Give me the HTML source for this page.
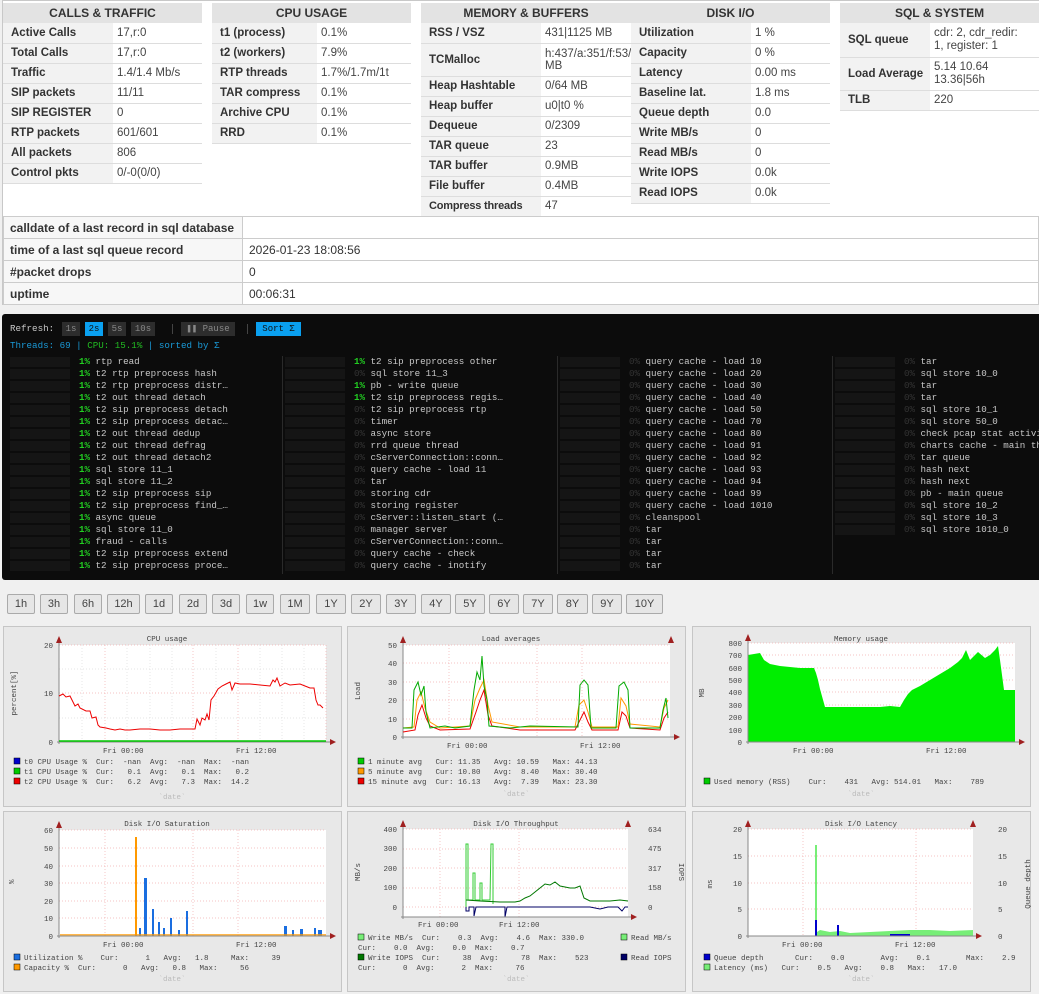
<!DOCTYPE html>
<html><head><meta charset="utf-8">
<style>
*{box-sizing:border-box;margin:0;padding:0}
body{width:1039px;height:994px;background:#f0f0f0;font-family:"Liberation Sans",Tahoma,sans-serif;position:relative;overflow:hidden;color:#333}
#top{position:absolute;left:2px;top:0;width:1040px;height:305px;background:#fff;border:1px solid #c8c8c8}
table.t{position:absolute;border-collapse:collapse;font-size:11.5px;table-layout:fixed}
table.t th{background:#e3e3e3;height:20px;font-weight:bold;color:#333;text-align:center;font-size:12px}
table.t td{border-bottom:1px solid #ddd;height:20px;padding:0 1px 0 8px;vertical-align:middle;white-space:nowrap;overflow:hidden}
table.t td.l{background:#f2f2f2;font-weight:bold;color:#333}
table.t td.v{color:#444;font-size:11.5px;padding-left:4px}
#bot{position:absolute;left:3px;top:216px;width:1036px;border-collapse:collapse;font-size:12px}
#bot td{height:22px;border:1px solid #ccc;padding:0 6px}
#bot td.l{width:239px;font-weight:bold;background:#f7f7f7}
#term{position:absolute;left:2px;top:314px;width:1040px;height:266px;background:#0c0c0c;border-radius:3px;font-family:"Liberation Mono","DejaVu Sans Mono",monospace;font-size:9.2px;color:#c8c8c8}
.tb{position:absolute;top:8px;height:14px;line-height:14px;background:#2d2d2d;color:#888;text-align:center;font-size:9px}
.row{position:absolute;height:11px;line-height:11px;white-space:nowrap}
.bar{position:absolute;width:60px;height:10px;background:#151515}
.sep{position:absolute;width:1px;background:#2a2a2a}
.p1{color:#22cc22;font-weight:bold}.p0{color:#333}
.pb{position:absolute;top:594px;height:20px;line-height:18px;border:1px solid #aaa;border-radius:2px;background:#e6e6e6;font-size:11px;color:#444;text-align:center}
.ch{position:absolute;width:339px;height:181px;background:#e8e8e8;border:1px solid #c6c6c6}
.ch svg{position:absolute;left:-1px;top:-1px}
svg text{font-family:"Liberation Mono","DejaVu Sans Mono",monospace;font-size:7.5px;fill:#444}
</style></head><body>
<div id="top"></div>
<table class="t" style="left:3px;top:3px;width:199px"><colgroup><col style="width:110px"><col style="width:89px"></colgroup>
<tr><th colspan="2">CALLS &amp; TRAFFIC</th></tr>
<tr><td class="l">Active Calls</td><td class="v">17,r:0</td></tr>
<tr><td class="l">Total Calls</td><td class="v">17,r:0</td></tr>
<tr><td class="l">Traffic</td><td class="v">1.4/1.4 Mb/s</td></tr>
<tr><td class="l">SIP packets</td><td class="v">11/11</td></tr>
<tr><td class="l">SIP REGISTER</td><td class="v">0</td></tr>
<tr><td class="l">RTP packets</td><td class="v">601/601</td></tr>
<tr><td class="l">All packets</td><td class="v">806</td></tr>
<tr><td class="l">Control pkts</td><td class="v">0/-0(0/0)</td></tr>
</table>
<table class="t" style="left:212px;top:3px;width:199px"><colgroup><col style="width:105px"><col style="width:94px"></colgroup>
<tr><th colspan="2">CPU USAGE</th></tr>
<tr><td class="l">t1 (process)</td><td class="v">0.1%</td></tr>
<tr><td class="l">t2 (workers)</td><td class="v">7.9%</td></tr>
<tr><td class="l">RTP threads</td><td class="v">1.7%/1.7m/1t</td></tr>
<tr><td class="l">TAR compress</td><td class="v">0.1%</td></tr>
<tr><td class="l">Archive CPU</td><td class="v">0.1%</td></tr>
<tr><td class="l">RRD</td><td class="v">0.1%</td></tr>
</table>
<table class="t" style="left:421px;top:3px;width:210px"><colgroup><col style="width:120px"><col style="width:90px"></colgroup>
<tr><th colspan="2">MEMORY &amp; BUFFERS</th></tr>
<tr><td class="l">RSS / VSZ</td><td class="v">431|1125 MB</td></tr>
<tr><td class="l" style="height:33px">TCMalloc</td><td class="v" style="line-height:12px">h:437/a:351/f:53/<br>MB</td></tr>
<tr><td class="l">Heap Hashtable</td><td class="v">0/64 MB</td></tr>
<tr><td class="l">Heap buffer</td><td class="v">u0|t0 %</td></tr>
<tr><td class="l">Dequeue</td><td class="v">0/2309</td></tr>
<tr><td class="l">TAR queue</td><td class="v">23</td></tr>
<tr><td class="l">TAR buffer</td><td class="v">0.9MB</td></tr>
<tr><td class="l">File buffer</td><td class="v">0.4MB</td></tr>
<tr><td class="l" style="font-size:11px;letter-spacing:-0.2px">Compress threads</td><td class="v">47</td></tr>
</table>
<table class="t" style="left:631px;top:3px;width:199px"><colgroup><col style="width:120px"><col style="width:79px"></colgroup>
<tr><th colspan="2">DISK I/O</th></tr>
<tr><td class="l">Utilization</td><td class="v">1 %</td></tr>
<tr><td class="l">Capacity</td><td class="v">0 %</td></tr>
<tr><td class="l">Latency</td><td class="v">0.00 ms</td></tr>
<tr><td class="l">Baseline lat.</td><td class="v">1.8 ms</td></tr>
<tr><td class="l">Queue depth</td><td class="v">0.0</td></tr>
<tr><td class="l">Write MB/s</td><td class="v">0</td></tr>
<tr><td class="l">Read MB/s</td><td class="v">0</td></tr>
<tr><td class="l">Write IOPS</td><td class="v">0.0k</td></tr>
<tr><td class="l">Read IOPS</td><td class="v">0.0k</td></tr>
</table>
<table class="t" style="left:840px;top:3px;width:199px"><colgroup><col style="width:90px"><col style="width:109px"></colgroup>
<tr><th colspan="2">SQL &amp; SYSTEM</th></tr>
<tr><td class="l" style="height:34px">SQL queue</td><td class="v" style="line-height:13px">cdr: 2, cdr_redir:<br>1, register: 1</td></tr>
<tr><td class="l" style="height:33px">Load Average</td><td class="v" style="line-height:13px">5.14 10.64<br>13.36|56h</td></tr>
<tr><td class="l">TLB</td><td class="v">220</td></tr>
</table>
<table id="bot">
<tr><td class="l">calldate of a last record in sql database</td><td></td></tr>
<tr><td class="l">time of a last sql queue record</td><td>2026-01-23 18:08:56</td></tr>
<tr><td class="l">#packet drops</td><td>0</td></tr>
<tr><td class="l">uptime</td><td>00:06:31</td></tr>
</table>

<div id="term">
<div class="row" style="left:8px;top:8px;line-height:14px">Refresh:</div>
<div class="tb" style="left:60px;width:18px">1s</div>
<div class="tb" style="left:83px;width:18px;background:#0aa0f0;color:#111">2s</div>
<div class="tb" style="left:106px;width:18px">5s</div>
<div class="tb" style="left:129px;width:24px">10s</div>
<div class="sep" style="left:170px;top:10px;height:10px;background:#444"></div>
<div class="tb" style="left:179px;width:54px">❚❚ Pause</div>
<div class="sep" style="left:245px;top:10px;height:10px;background:#444"></div>
<div class="tb" style="left:254px;width:45px;background:#0aa0f0;color:#111">Sort Σ</div>
<div class="row" style="left:8px;top:26px;color:#1a9ad8">Threads: 69 | <span style="color:#22bb22">CPU: 15.1%</span> | sorted by Σ</div>
<div id="rows"></div>
</div>
<script>
var cols=[
["1rtp read","1t2 rtp preprocess hash","1t2 rtp preprocess distr…","1t2 out thread detach","1t2 sip preprocess detach","1t2 sip preprocess detac…","1t2 out thread dedup","1t2 out thread defrag","1t2 out thread detach2","1sql store 11_1","1sql store 11_2","1t2 sip preprocess sip","1t2 sip preprocess find_…","1async queue","1sql store 11_0","1fraud - calls","1t2 sip preprocess extend","1t2 sip preprocess proce…"],
["1t2 sip preprocess other","0sql store 11_3","1pb - write queue","1t2 sip preprocess regis…","0t2 sip preprocess rtp","0timer","0async store","0rrd queue thread","0cServerConnection::conn…","0query cache - load 11","0tar","0storing cdr","0storing register","0cServer::listen_start (…","0manager server","0cServerConnection::conn…","0query cache - check","0query cache - inotify"],
["0query cache - load 10","0query cache - load 20","0query cache - load 30","0query cache - load 40","0query cache - load 50","0query cache - load 70","0query cache - load 80","0query cache - load 91","0query cache - load 92","0query cache - load 93","0query cache - load 94","0query cache - load 99","0query cache - load 1010","0cleanspool","0tar","0tar","0tar","0tar"],
["0tar","0sql store 10_0","0tar","0tar","0sql store 10_1","0sql store 50_0","0check pcap stat activity","0charts cache - main thread","0tar queue","0hash next","0hash next","0pb - main queue","0sql store 10_2","0sql store 10_3","0sql store 1010_0"]];
var h="",xs=[8,283,558,833];
cols.forEach(function(c,ci){var x=xs[ci];
 if(ci>0)h+='<div class="sep" style="left:'+(x-3)+'px;top:42px;height:218px"></div>';
 c.forEach(function(s,i){var y=42+i*12;
  h+='<div class="bar" style="left:'+x+'px;top:'+(y+1)+'px"></div>';
  h+='<div class="row" style="left:'+(x+69)+'px;top:'+y+'px"><span class="'+(s[0]=="1"?"p1":"p0")+'">'+s[0]+'%</span> '+s.slice(1)+'</div>';});});
document.getElementById("rows").innerHTML=h;
</script>

<div class="pb" style="left:7px;width:28px">1h</div>
<div class="pb" style="left:40px;width:28px">3h</div>
<div class="pb" style="left:74px;width:28px">6h</div>
<div class="pb" style="left:107px;width:33px">12h</div>
<div class="pb" style="left:145px;width:28px">1d</div>
<div class="pb" style="left:179px;width:28px">2d</div>
<div class="pb" style="left:212px;width:28px">3d</div>
<div class="pb" style="left:246px;width:28px">1w</div>
<div class="pb" style="left:280px;width:30px">1M</div>
<div class="pb" style="left:316px;width:30px">1Y</div>
<div class="pb" style="left:351px;width:30px">2Y</div>
<div class="pb" style="left:386px;width:30px">3Y</div>
<div class="pb" style="left:421px;width:30px">4Y</div>
<div class="pb" style="left:455px;width:30px">5Y</div>
<div class="pb" style="left:489px;width:30px">6Y</div>
<div class="pb" style="left:523px;width:30px">7Y</div>
<div class="pb" style="left:557px;width:31px">8Y</div>
<div class="pb" style="left:592px;width:30px">9Y</div>
<div class="pb" style="left:626px;width:37px">10Y</div>

<!-- charts -->
<div class="ch" style="left:3px;top:626px"><svg width="339" height="181"><g transform="translate(-3,-626)">
<rect x="59" y="645" width="267" height="97" fill="#fff"/>
<g stroke="#f2b0b0" stroke-dasharray="1,2" stroke-width="0.7"><line x1="59" x2="326" y1="645" y2="645"/><line x1="59" x2="326" y1="693" y2="693"/><line x1="105" x2="105" y1="645" y2="742"/><line x1="238" x2="238" y1="645" y2="742"/><line x1="193" x2="193" y1="645" y2="742"/><line x1="326" x2="326" y1="645" y2="742"/></g>
<g stroke="#ddd" stroke-dasharray="1,2" stroke-width="0.7"><line x1="59" x2="326" y1="669" y2="669"/><line x1="59" x2="326" y1="718" y2="718"/><line x1="82" x2="82" y1="645" y2="742"/><line x1="127" x2="127" y1="645" y2="742"/><line x1="150" x2="150" y1="645" y2="742"/><line x1="172" x2="172" y1="645" y2="742"/><line x1="216" x2="216" y1="645" y2="742"/><line x1="260" x2="260" y1="645" y2="742"/><line x1="282" x2="282" y1="645" y2="742"/><line x1="304" x2="304" y1="645" y2="742"/></g>
<line x1="59" y1="640" x2="59" y2="744" stroke="#888"/><line x1="57" y1="742" x2="332" y2="742" stroke="#888"/>
<path d="M56,643 L59,636 L62,643Z M330,739 L336,742 L330,745Z" fill="#a02020"/>
<polyline fill="none" stroke="#e00" stroke-width="1" points="59,696 63,694 66,697 70,696 72,700 75,706 78,704 80,708 86,711 90,711 92,718 96,717 98,725 100,727 106,728 110,729 115,730 120,729 125,730 130,730 140,729 150,729 160,730 170,730 180,729 190,729 195,729 197,719 200,725 202,718 205,720 207,714 209,720 211,700 214,696 218,689 222,686 226,684 230,682 232,690 235,683 240,684 250,684 260,685 270,686 273,680 275,682 277,678 280,686 285,683 290,685 300,684 305,686 310,688 314,688 316,700 318,705 320,705 323,708"/>
<line x1="59" x2="326" y1="741" y2="741" stroke="#0c0" stroke-width="1.5"/>
<text x="167" y="641" text-anchor="middle">CPU usage</text>
<text x="53" y="648" text-anchor="end">20</text><text x="53" y="696" text-anchor="end">10</text><text x="53" y="745" text-anchor="end">0</text>
<text x="16" y="693" transform="rotate(-90 16 693)" text-anchor="middle">percent[%]</text>
<text x="103" y="753">Fri 00:00</text><text x="236" y="753">Fri 12:00</text>
<rect x="14" y="758" width="6" height="6" fill="#00c" stroke="#000" stroke-width=".5"/><rect x="14" y="768" width="6" height="6" fill="#0c0" stroke="#000" stroke-width=".5"/><rect x="14" y="778" width="6" height="6" fill="#e00" stroke="#000" stroke-width=".5"/>
<text x="24" y="764" xml:space="preserve">t0 CPU Usage %  Cur:  -nan  Avg:  -nan  Max:  -nan</text>
<text x="24" y="774" xml:space="preserve">t1 CPU Usage %  Cur:   0.1  Avg:   0.1  Max:   0.2</text>
<text x="24" y="784" xml:space="preserve">t2 CPU Usage %  Cur:   6.2  Avg:   7.3  Max:  14.2</text>
<text x="172" y="799" text-anchor="middle" style="fill:#bbb">`date`</text>
</g></svg></div>

<div class="ch" style="left:347px;top:626px"><svg width="339" height="181"><g transform="translate(-347,-626)">
<rect x="403" y="645" width="267" height="92" fill="#fff"/>
<g stroke="#f2b0b0" stroke-dasharray="1,2" stroke-width="0.7"><line x1="403" x2="670" y1="645" y2="645"/><line x1="403" x2="670" y1="663" y2="663"/><line x1="403" x2="670" y1="682" y2="682"/><line x1="403" x2="670" y1="700" y2="700"/><line x1="403" x2="670" y1="719" y2="719"/><line x1="449" x2="449" y1="645" y2="737"/><line x1="582" x2="582" y1="645" y2="737"/><line x1="537" x2="537" y1="645" y2="737"/></g>
<line x1="403" y1="640" x2="403" y2="739" stroke="#888"/><line x1="401" y1="737" x2="676" y2="737" stroke="#888"/>
<path d="M400,643 L403,636 L406,643Z M674,734 L680,737 L674,740Z M668,643 L671,636 L674,643Z" fill="#a02020"/>
<polyline fill="none" stroke="#e00" points="403,732 415,730 418,715 422,705 426,718 430,726 440,730 470,729 476,712 480,700 484,690 488,715 492,726 520,730 575,730 580,720 584,712 588,722 592,730 618,730 622,712 626,716 630,728 660,730 664,718 668,712"/>
<polyline fill="none" stroke="#f90" points="403,728 414,727 417,700 421,692 425,708 430,722 440,728 470,726 475,700 480,688 484,680 488,705 492,722 520,727 575,727 579,705 584,700 588,712 592,727 618,727 621,698 626,706 630,724 660,727 664,708 668,700"/>
<polyline fill="none" stroke="#0a0" points="403,728 412,728 414,690 418,682 421,695 424,686 426,712 430,728 445,726 455,728 470,726 474,690 477,672 480,680 482,656 484,686 487,700 489,726 510,728 530,726 578,727 580,685 584,680 588,685 591,728 616,728 619,686 624,682 628,690 630,728 660,728 663,710 666,698 668,718"/>
<text x="511" y="641" text-anchor="middle">Load averages</text>
<text x="397" y="648" text-anchor="end">50</text><text x="397" y="666" text-anchor="end">40</text><text x="397" y="685" text-anchor="end">30</text><text x="397" y="703" text-anchor="end">20</text><text x="397" y="722" text-anchor="end">10</text><text x="397" y="740" text-anchor="end">0</text>
<text x="360" y="691" transform="rotate(-90 360 691)" text-anchor="middle">Load</text>
<text x="447" y="748">Fri 00:00</text><text x="580" y="748">Fri 12:00</text>
<rect x="358" y="758" width="6" height="6" fill="#0c0" stroke="#000" stroke-width=".5"/><rect x="358" y="768" width="6" height="6" fill="#f90" stroke="#000" stroke-width=".5"/><rect x="358" y="778" width="6" height="6" fill="#e00" stroke="#000" stroke-width=".5"/>
<text x="368" y="764" xml:space="preserve">1 minute avg   Cur: 11.35   Avg: 10.59   Max: 44.13</text>
<text x="368" y="774" xml:space="preserve">5 minute avg   Cur: 10.80   Avg:  8.40   Max: 30.40</text>
<text x="368" y="784" xml:space="preserve">15 minute avg  Cur: 16.13   Avg:  7.39   Max: 23.30</text>
<text x="516" y="796" text-anchor="middle" style="fill:#bbb">`date`</text>
</g></svg></div>

<div class="ch" style="left:692px;top:626px"><svg width="339" height="181"><g transform="translate(-692,-626)">
<rect x="748" y="643" width="267" height="99" fill="#fff"/>
<g stroke="#f2b0b0" stroke-dasharray="1,2" stroke-width="0.7"><line x1="748" x2="1015" y1="643" y2="643"/><line x1="748" x2="1015" y1="655" y2="655"/><line x1="748" x2="1015" y1="668" y2="668"/><line x1="748" x2="1015" y1="680" y2="680"/><line x1="748" x2="1015" y1="692" y2="692"/><line x1="748" x2="1015" y1="705" y2="705"/><line x1="748" x2="1015" y1="717" y2="717"/><line x1="748" x2="1015" y1="730" y2="730"/></g>
<polygon fill="#00ee00" points="748,742 748,655 760,653 764,660 770,664 780,666 790,667 800,668 814,668 816,673 818,680 820,689 825,707 880,707 890,706 900,707 904,700 908,694 912,690 920,686 930,680 940,674 950,668 958,662 962,658 966,650 970,660 978,652 985,658 990,655 995,650 998,646 1000,660 1004,690 1015,690 1015,742"/>
<line x1="748" y1="638" x2="748" y2="744" stroke="#888"/><line x1="746" y1="742" x2="1021" y2="742" stroke="#888"/>
<path d="M745,641 L748,634 L751,641Z M1019,739 L1025,742 L1019,745Z" fill="#a02020"/>
<text x="861" y="641" text-anchor="middle">Memory usage</text>
<text x="742" y="646" text-anchor="end">800</text><text x="742" y="658" text-anchor="end">700</text><text x="742" y="671" text-anchor="end">600</text><text x="742" y="683" text-anchor="end">500</text><text x="742" y="695" text-anchor="end">400</text><text x="742" y="708" text-anchor="end">300</text><text x="742" y="720" text-anchor="end">200</text><text x="742" y="733" text-anchor="end">100</text><text x="742" y="745" text-anchor="end">0</text>
<text x="704" y="693" transform="rotate(-90 704 693)" text-anchor="middle">MB</text>
<text x="793" y="753">Fri 00:00</text><text x="926" y="753">Fri 12:00</text>
<rect x="704" y="778" width="6" height="6" fill="#0c0" stroke="#000" stroke-width=".5"/>
<text x="714" y="784" xml:space="preserve">Used memory (RSS)    Cur:    431   Avg: 514.01   Max:    789</text>
<text x="861" y="796" text-anchor="middle" style="fill:#bbb">`date`</text>
</g></svg></div>

<div class="ch" style="left:3px;top:811px"><svg width="339" height="181"><g transform="translate(-3,-811)">
<rect x="59" y="830" width="267" height="106" fill="#fff"/>
<g stroke="#f2b0b0" stroke-dasharray="1,2" stroke-width="0.7"><line x1="59" x2="326" y1="830" y2="830"/><line x1="59" x2="326" y1="848" y2="848"/><line x1="59" x2="326" y1="866" y2="866"/><line x1="59" x2="326" y1="883" y2="883"/><line x1="59" x2="326" y1="901" y2="901"/><line x1="59" x2="326" y1="918" y2="918"/><line x1="105" x2="105" y1="830" y2="936"/><line x1="238" x2="238" y1="830" y2="936"/><line x1="193" x2="193" y1="830" y2="936"/></g>
<rect x="135" y="837" width="2" height="99" fill="#f90"/>
<g fill="#1a6ee0"><rect x="144" y="878" width="3" height="58"/><rect x="152" y="909" width="2" height="27"/><rect x="158" y="922" width="2" height="14"/><rect x="170" y="918" width="2" height="18"/><rect x="186" y="911" width="2" height="25"/><rect x="139" y="928" width="2" height="8"/><rect x="163" y="928" width="2" height="8"/><rect x="178" y="930" width="2" height="6"/><rect x="284" y="926" width="3" height="10"/><rect x="292" y="930" width="2" height="6"/><rect x="300" y="929" width="3" height="7"/><rect x="314" y="928" width="2" height="8"/><rect x="318" y="930" width="4" height="6"/></g>
<rect x="60" y="934" width="266" height="2" fill="#f90" opacity=".7"/>
<line x1="59" y1="825" x2="59" y2="938" stroke="#888"/><line x1="57" y1="936" x2="332" y2="936" stroke="#888"/>
<path d="M56,828 L59,821 L62,828Z M330,933 L336,936 L330,939Z" fill="#a02020"/>
<text x="167" y="826" text-anchor="middle">Disk I/O Saturation</text>
<text x="53" y="833" text-anchor="end">60</text><text x="53" y="851" text-anchor="end">50</text><text x="53" y="869" text-anchor="end">40</text><text x="53" y="886" text-anchor="end">30</text><text x="53" y="904" text-anchor="end">20</text><text x="53" y="921" text-anchor="end">10</text><text x="53" y="939" text-anchor="end">0</text>
<text x="14" y="884" transform="rotate(-90 14 884)">%</text>
<text x="103" y="947">Fri 00:00</text><text x="236" y="947">Fri 12:00</text>
<rect x="14" y="954" width="6" height="6" fill="#1a6ee0" stroke="#000" stroke-width=".5"/><rect x="14" y="964" width="6" height="6" fill="#f90" stroke="#000" stroke-width=".5"/>
<text x="24" y="960" xml:space="preserve">Utilization %    Cur:      1   Avg:   1.8     Max:     39</text>
<text x="24" y="970" xml:space="preserve">Capacity %  Cur:      0   Avg:   0.8   Max:     56</text>
<text x="172" y="981" text-anchor="middle" style="fill:#bbb">`date`</text>
</g></svg></div>

<div class="ch" style="left:347px;top:811px"><svg width="339" height="181"><g transform="translate(-347,-811)">
<rect x="403" y="829" width="225" height="88" fill="#fff"/>
<g stroke="#f2b0b0" stroke-dasharray="1,2" stroke-width="0.7"><line x1="403" x2="628" y1="829" y2="829"/><line x1="403" x2="628" y1="849" y2="849"/><line x1="403" x2="628" y1="868" y2="868"/><line x1="403" x2="628" y1="888" y2="888"/><line x1="403" x2="628" y1="907" y2="907"/><line x1="440" x2="440" y1="829" y2="917"/><line x1="519" x2="519" y1="829" y2="917"/></g>
<polyline fill="none" stroke="#3c3" points="466,907 466,844 468,844 468,900 473,900 473,873 475,873 475,900 480,900 480,883 482,883 482,900 490,900 491,844 493,844 493,904"/>
<polyline fill="none" stroke="#070" points="466,900 480,901 500,902 515,902 520,901 525,898 530,896 535,892 540,888 545,884 550,885 555,882 560,886 565,887 570,888 575,888 580,886 584,898 590,901 610,901 620,900 628,901"/>
<polyline fill="none" stroke="#006" points="466,907 466,911 469,911 469,907 474,907 474,916 476,907 505,907 505,917 507,907 590,907 600,909 608,907 618,907 622,911 625,907 628,907"/>
<line x1="403" y1="824" x2="403" y2="919" stroke="#888"/><line x1="401" y1="917" x2="633" y2="917" stroke="#888"/>
<path d="M400,827 L403,820 L406,827Z M631,914 L637,917 L631,920Z M625,827 L628,820 L631,827Z" fill="#a02020"/>
<text x="516" y="826" text-anchor="middle">Disk I/O Throughput</text>
<text x="397" y="832" text-anchor="end">400</text><text x="397" y="851" text-anchor="end">300</text><text x="397" y="871" text-anchor="end">200</text><text x="397" y="890" text-anchor="end">100</text><text x="397" y="910" text-anchor="end">0</text>
<text x="648" y="832">634</text><text x="648" y="851">475</text><text x="648" y="871">317</text><text x="648" y="890">158</text><text x="648" y="910">0</text>
<text x="360" y="872" transform="rotate(-90 360 872)" text-anchor="middle">MB/s</text>
<text x="872" y="-679" transform="rotate(90)" text-anchor="middle">IOPS</text>
<text x="418" y="927">Fri 00:00</text><text x="499" y="927">Fri 12:00</text>
<rect x="358" y="934" width="6" height="6" fill="#7e7" stroke="#000" stroke-width=".5"/><rect x="621" y="934" width="6" height="6" fill="#7e7" stroke="#000" stroke-width=".5"/><rect x="358" y="954" width="6" height="6" fill="#070" stroke="#000" stroke-width=".5"/><rect x="621" y="954" width="6" height="6" fill="#006" stroke="#000" stroke-width=".5"/>
<text x="368" y="940" xml:space="preserve">Write MB/s  Cur:    0.3  Avg:    4.6  Max: 330.0</text><text x="631" y="940">Read MB/s</text>
<text x="358" y="950" xml:space="preserve">Cur:    0.0  Avg:    0.0  Max:    0.7</text>
<text x="368" y="960" xml:space="preserve">Write IOPS  Cur:     38  Avg:     78  Max:    523</text><text x="631" y="960">Read IOPS</text>
<text x="358" y="970" xml:space="preserve">Cur:      0  Avg:      2  Max:     76</text>
<text x="516" y="981" text-anchor="middle" style="fill:#bbb">`date`</text>
</g></svg></div>

<div class="ch" style="left:692px;top:811px"><svg width="339" height="181"><g transform="translate(-692,-811)">
<rect x="748" y="829" width="225" height="107" fill="#fff"/>
<g stroke="#f2b0b0" stroke-dasharray="1,2" stroke-width="0.7"><line x1="748" x2="973" y1="829" y2="829"/><line x1="748" x2="973" y1="856" y2="856"/><line x1="748" x2="973" y1="883" y2="883"/><line x1="748" x2="973" y1="909" y2="909"/><line x1="803" x2="803" y1="829" y2="936"/><line x1="916" x2="916" y1="829" y2="936"/></g>
<polygon fill="#7e7" points="815,936 815,845 817,845 817,932 820,930 830,932 840,931 850,933 870,932 890,931 910,930 930,930 950,931 973,930 973,936"/>
<rect x="815" y="920" width="2" height="16" fill="#00c"/><rect x="837" y="925" width="2" height="11" fill="#00c"/><rect x="890" y="934" width="20" height="2" fill="#00c"/>
<line x1="748" y1="824" x2="748" y2="938" stroke="#888"/><line x1="746" y1="936" x2="978" y2="936" stroke="#888"/>
<path d="M745,827 L748,820 L751,827Z M976,933 L982,936 L976,939Z M970,827 L973,820 L976,827Z" fill="#a02020"/>
<text x="861" y="826" text-anchor="middle">Disk I/O Latency</text>
<text x="742" y="832" text-anchor="end">20</text><text x="742" y="859" text-anchor="end">15</text><text x="742" y="886" text-anchor="end">10</text><text x="742" y="912" text-anchor="end">5</text><text x="742" y="939" text-anchor="end">0</text>
<text x="998" y="832">20</text><text x="998" y="859">15</text><text x="998" y="886">10</text><text x="998" y="912">5</text><text x="998" y="939">0</text>
<text x="712" y="884" transform="rotate(-90 712 884)" text-anchor="middle">ms</text>
<text x="1026" y="884" transform="rotate(-90 1026 884)" text-anchor="middle" dy="4">Queue depth</text>
<text x="782" y="947">Fri 00:00</text><text x="895" y="947">Fri 12:00</text>
<rect x="704" y="954" width="6" height="6" fill="#00c" stroke="#000" stroke-width=".5"/><rect x="704" y="964" width="6" height="6" fill="#7e7" stroke="#000" stroke-width=".5"/>
<text x="714" y="960" xml:space="preserve">Queue depth       Cur:    0.0        Avg:    0.1        Max:    2.9</text>
<text x="714" y="970" xml:space="preserve">Latency (ms)   Cur:    0.5   Avg:    0.8   Max:   17.0</text>
<text x="861" y="981" text-anchor="middle" style="fill:#bbb">`date`</text>
</g></svg></div>
</body></html>
